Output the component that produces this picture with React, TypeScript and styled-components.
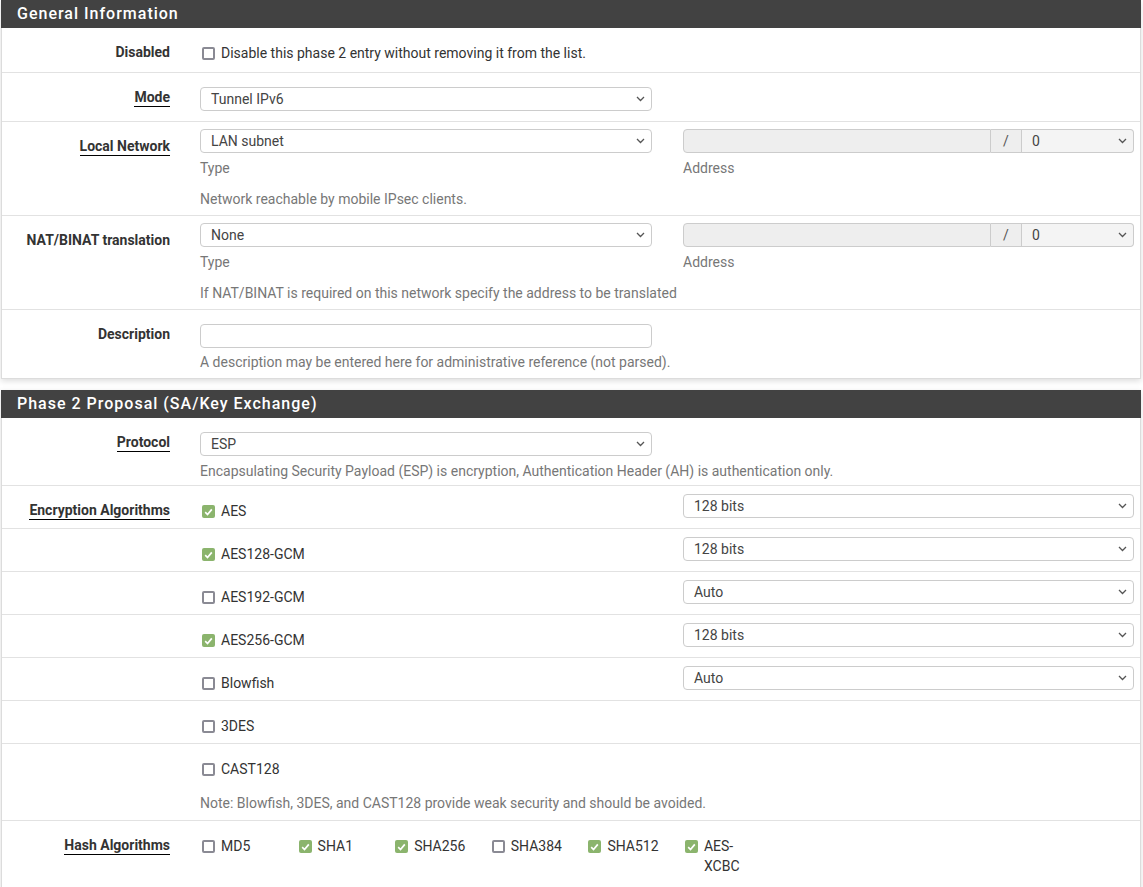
import * as React from 'react';
import styled, { createGlobalStyle } from 'styled-components';

const GlobalStyle = createGlobalStyle`
    body {
        margin: 0;
        background: #fff;
        font-family: Roboto, "Liberation Sans", sans-serif;
        font-size: 14px;
        color: #333;
    }
`;

const Page = styled.div`
    width: 1140px;
    padding-left: 1px;
`;

const Panel = styled.section`
    margin-bottom: 11px;
    background: #fff;
    box-shadow: 0 2px 6px rgba(0, 0, 0, 0.14);
`;

const PanelHeading = styled.h2`
    margin: 0;
    height: 28px;
    padding: 0 16px;
    background: #424242;
    color: #fff;
    font-size: 16px;
    font-weight: 500;
    letter-spacing: 1px;
    line-height: 28px;
`;

const PanelBody = styled.div`
    border: 1px solid #dcdcdc;
    border-top: none;
`;

const Row = styled.div<{ $pb?: number }>`
    display: grid;
    grid-template-columns: 198px 452px 482px;
    padding: 7px 0 ${ p => p.$pb ?? 10 }px 0;
    border-bottom: 1px solid #e2e2e2;

    &:last-child {
        border-bottom: none;
    }
`;

const Label = styled.div`
    padding: 7px 30px 0 0;
    text-align: right;
    font-weight: 700;
    line-height: 20px;
`;

const Hint = styled.span`
    border-bottom: 1px solid #000;
    padding-bottom: 1px;
`;

const Cell = styled.div<{ $wide?: boolean }>`
    grid-column: ${ p => p.$wide ? '2 / span 2' : 'auto' };
`;

const RightCell = styled.div`
    padding-left: 31px;
`;

const Narrow = styled.div<{ $mt?: number }>`
    width: 452px;
    margin-top: ${ p => p.$mt ?? 0 }px;
`;

const SelectBox = styled.div<{ $mt?: number }>`
    display: flex;
    align-items: center;
    justify-content: space-between;
    box-sizing: border-box;
    height: 24px;
    margin-top: ${ p => p.$mt ?? 0 }px;
    padding: 0 6px 0 10px;
    border: 1px solid #ccc;
    border-radius: 4px;
    background: #fff;
    color: #444;
    line-height: 20px;

    svg {
        flex: none;
    }
`;

const TextInput = styled.div`
    box-sizing: border-box;
    height: 24px;
    border: 1px solid #ccc;
    border-radius: 4px;
    background: #fff;
`;

const InputGroup = styled.div`
    display: flex;
    height: 24px;
`;

const AddressInput = styled.div`
    flex: 1;
    border: 1px solid #ccc;
    border-radius: 4px 0 0 4px;
    background: #eee;
`;

const Addon = styled.div`
    width: 30px;
    border: 1px solid #ccc;
    border-left: none;
    background: #eee;
    color: #555;
    text-align: center;
    line-height: 22px;
`;

const MaskSelect = styled(SelectBox)`
    width: 112px;
    border-left: none;
    border-radius: 0 4px 4px 0;
    background: #f4f4f4;
`;

const Help = styled.div<{ $mt?: number }>`
    margin-top: ${ p => p.$mt ?? 5 }px;
    color: #777;
    line-height: 20px;
`;

const CheckLine = styled.label`
    display: flex;
    align-items: flex-start;
    gap: 6px;
    padding: 8px 0 0 2px;
    line-height: 20px;
`;

const Box = styled.span<{ $on?: boolean }>`
    flex: none;
    box-sizing: border-box;
    width: 13px;
    height: 13px;
    margin-top: 4px;
    border-radius: 2px;
    border: ${ p => p.$on ? 'none' : '2px solid #8a8a94' };
    background: ${ p => p.$on ? '#8bb46d' : '#fff' };
    display: flex;
    align-items: center;
    justify-content: center;
`;

const HashList = styled.div`
    display: flex;
`;

const HashItem = styled(CheckLine)`
    box-sizing: border-box;
    width: 66.6px;
    margin-right: 30px;
`;

const Chevron = () => (
    <svg width="9" height="6" viewBox="0 0 9 6">
        <path d="M1 1l3.5 3.5L8 1" fill="none" stroke="#555" strokeWidth="1.3"/>
    </svg>
);

const Tick = () => (
    <svg width="9" height="8" viewBox="0 0 9 8">
        <path d="M1.2 4.2l2.3 2.3L7.8 1.4" fill="none" stroke="#fff" strokeWidth="1.7"/>
    </svg>
);

const Select = ( { value, mt }: { value: string; mt?: number } ) => (
    <SelectBox $mt={ mt }>
        <span>{ value }</span>
        <Chevron/>
    </SelectBox>
);

const Check = ( { on, text }: { on?: boolean; text: string } ) => (
    <CheckLine>
        <Box $on={ on }>{ on && <Tick/> }</Box>
        <span>{ text }</span>
    </CheckLine>
);

const Address = () => (
    <RightCell>
        <InputGroup>
            <AddressInput/>
            <Addon>/</Addon>
            <MaskSelect><span>0</span><Chevron/></MaskSelect>
        </InputGroup>
        <Help>Address</Help>
    </RightCell>
);

const encryption = [
    { name: 'AES', on: true, bits: '128 bits', label: true },
    { name: 'AES128-GCM', on: true, bits: '128 bits' },
    { name: 'AES192-GCM', on: false, bits: 'Auto' },
    { name: 'AES256-GCM', on: true, bits: '128 bits' },
    { name: 'Blowfish', on: false, bits: 'Auto' },
    { name: '3DES', on: false },
];

const hashes = [
    { name: 'MD5', on: false },
    { name: 'SHA1', on: true },
    { name: 'SHA256', on: true },
    { name: 'SHA384', on: false },
    { name: 'SHA512', on: true },
    { name: 'AES-XCBC', on: true },
];

const App = () => (
    <Page>
        <GlobalStyle/>
        <Panel>
            <PanelHeading>General Information</PanelHeading>
            <PanelBody>
                <Row $pb={ 9 }>
                    <Label>Disabled</Label>
                    <Cell $wide>
                        <Check text="Disable this phase 2 entry without removing it from the list."/>
                    </Cell>
                </Row>
                <Row>
                    <Label><Hint>Mode</Hint></Label>
                    <Cell><Select value="Tunnel IPv6" mt={ 7 }/></Cell>
                </Row>
                <Row $pb={ 6 }>
                    <Label><Hint>Local Network</Hint></Label>
                    <Cell>
                        <Select value="LAN subnet"/>
                        <Help>Type</Help>
                        <Help $mt={ 11 }>Network reachable by mobile IPsec clients.</Help>
                    </Cell>
                    <Address/>
                </Row>
                <Row $pb={ 6 }>
                    <Label>NAT/BINAT translation</Label>
                    <Cell>
                        <Select value="None"/>
                        <Help>Type</Help>
                    </Cell>
                    <Address/>
                    <Cell/>
                    <Cell $wide>
                        <Help $mt={ 11 }>If NAT/BINAT is required on this network specify the address to be translated</Help>
                    </Cell>
                </Row>
                <Row $pb={ 6 }>
                    <Label>Description</Label>
                    <Cell $wide>
                        <Narrow $mt={ 7 }><TextInput/></Narrow>
                        <Help $mt={ 4 }>A description may be entered here for administrative reference (not parsed).</Help>
                    </Cell>
                </Row>
            </PanelBody>
        </Panel>
        <Panel>
            <PanelHeading>Phase 2 Proposal (SA/Key Exchange)</PanelHeading>
            <PanelBody>
                <Row $pb={ 4 }>
                    <Label><Hint>Protocol</Hint></Label>
                    <Cell $wide>
                        <Narrow $mt={ 7 }><Select value="ESP"/></Narrow>
                        <Help>Encapsulating Security Payload (ESP) is encryption, Authentication Header (AH) is authentication only.</Help>
                    </Cell>
                </Row>
                { encryption.map( e => (
                    <Row key={ e.name } $pb={ 7 }>
                        <Label>{ e.label && <Hint>Encryption Algorithms</Hint> }</Label>
                        <Cell><Check on={ e.on } text={ e.name }/></Cell>
                        <RightCell>
                            { e.bits && <Select value={ e.bits } mt={ 1 }/> }
                        </RightCell>
                    </Row>
                ) ) }
                <Row $pb={ 7 }>
                    <Label/>
                    <Cell $wide>
                        <Check text="CAST128"/>
                        <Help $mt={ 14 }>Note: Blowfish, 3DES, and CAST128 provide weak security and should be avoided.</Help>
                    </Cell>
                </Row>
                <Row $pb={ 12 }>
                    <Label><Hint>Hash Algorithms</Hint></Label>
                    <Cell $wide>
                        <HashList>
                            { hashes.map( h => (
                                <HashItem key={ h.name }>
                                    <Box $on={ h.on }>{ h.on && <Tick/> }</Box>
                                    <span>{ h.name }</span>
                                </HashItem>
                            ) ) }
                        </HashList>
                    </Cell>
                </Row>
            </PanelBody>
        </Panel>
    </Page>
);

export default App;
